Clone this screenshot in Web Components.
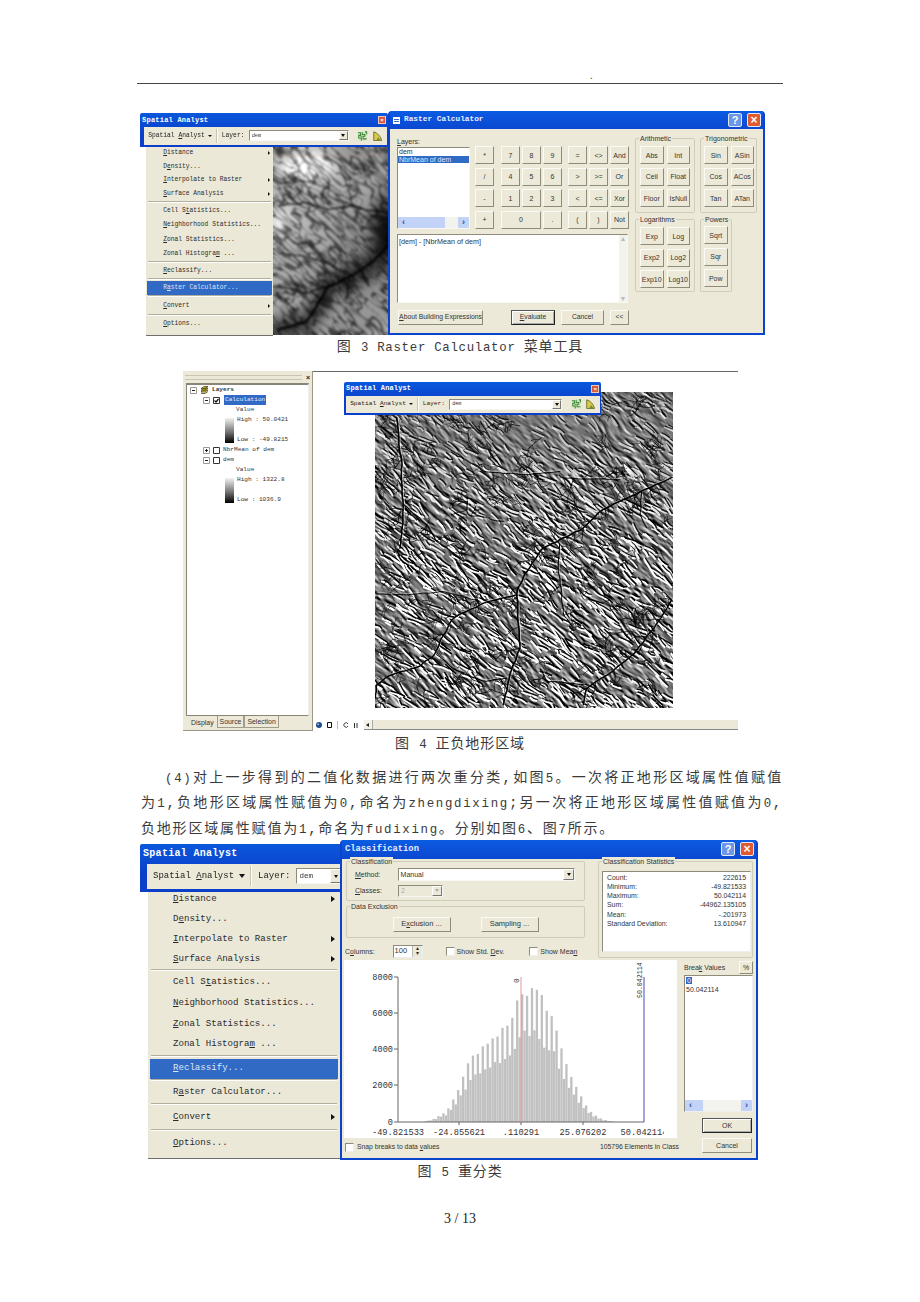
<!DOCTYPE html>
<html lang="zh"><head><meta charset="utf-8"><title>Raster Calculator</title>
<style>
html,body{margin:0;padding:0;background:#fff}
</style></head>
<body>
<doc-page>
  <doc-header></doc-header>

  <fig-three>
    <sa-menu slot="menu" style="--k:.69;width:127px;left:6px;top:35px">
      <sa-item arrow><u>D</u>istance</sa-item><sa-item>D<u>e</u>nsity...</sa-item><sa-item arrow><u>I</u>nterpolate to Raster</sa-item><sa-item arrow><u>S</u>urface Analysis</sa-item><sa-sep></sa-sep>
      <sa-item h="22">Cell S<u>t</u>atistics...</sa-item><sa-item h="21"><u>N</u>eighborhood Statistics...</sa-item><sa-item><u>Z</u>onal Statistics...</sa-item><sa-item h="21">Zonal Histogra<u>m</u> ...</sa-item><sa-sep></sa-sep>
      <sa-item h="22"><u>R</u>eclassify...</sa-item><sa-sep></sa-sep><sa-item h="22" active>R<u>a</u>ster Calculator...</sa-item><sa-sep></sa-sep>
      <sa-item h="24" arrow><u>C</u>onvert</sa-item><sa-sep></sa-sep><sa-item h="24"><u>O</u>ptions...</sa-item>
    </sa-menu>
    <sa-toolbar slot="bar" style="--k:.7;--inset:4px;width:248px"></sa-toolbar>
    <terrain-map slot="raster" mode="dem" w="115" h="188"></terrain-map>
    <xp-window slot="win" icon style="--title-size:7.8px;--title-h:18px;width:377px">
      <span slot="title">Raster Calculator</span>
      <calc-body></calc-body>
    </xp-window>
  </fig-three>
  <doc-caption style="padding-top:2px">图 <span>3 Raster Calculator </span>菜单工具</doc-caption>

  <fig-four>
    <toc-panel slot="toc"></toc-panel>
    <sa-toolbar slot="over" style="--k:.69;--inset:2px;width:257px;left:31px;top:10px;position:absolute"></sa-toolbar>
    <terrain-map slot="raster" mode="relief" w="298" h="316"></terrain-map>
  </fig-four>
  <doc-caption style="--cap-h:22px;margin-top:2px">图 <span>4 </span>正负地形区域</doc-caption>

  <doc-para></doc-para>

  <fig-five>
    <sa-menu slot="menu" style="--k:1;width:192px;left:8px;top:49px">
      <sa-item arrow><u>D</u>istance</sa-item><sa-item>D<u>e</u>nsity...</sa-item><sa-item arrow><u>I</u>nterpolate to Raster</sa-item><sa-item arrow><u>S</u>urface Analysis</sa-item><sa-sep></sa-sep>
      <sa-item h="22">Cell S<u>t</u>atistics...</sa-item><sa-item h="21"><u>N</u>eighborhood Statistics...</sa-item><sa-item><u>Z</u>onal Statistics...</sa-item><sa-item h="21">Zonal Histogra<u>m</u> ...</sa-item><sa-sep></sa-sep>
      <sa-item h="22" active><u>R</u>eclassify...</sa-item><sa-sep></sa-sep><sa-item h="22">R<u>a</u>ster Calculator...</sa-item><sa-sep></sa-sep>
      <sa-item h="24" arrow><u>C</u>onvert</sa-item><sa-sep></sa-sep><sa-item h="24"><u>O</u>ptions...</sa-item>
    </sa-menu>
    <sa-toolbar slot="bar" compact style="--k:1;--inset:7px;width:204px"></sa-toolbar>
    <xp-window slot="win" style="--title-size:8.8px;--title-h:19px;width:418px">
      <span slot="title">Classification</span>
      <class-body></class-body>
    </xp-window>
  </fig-five>
  <doc-caption style="--cap-h:22px;margin-top:1px">图 <span>5 </span>重分类</doc-caption>
  <doc-pageno>3 / 13</doc-pageno>
</doc-page>

<script>
const MONO='"Liberation Mono","Noto Sans CJK SC",monospace';
const SANS='"Liberation Sans","Noto Sans CJK SC",sans-serif';
const AFTER={};
function el(name,render){
  customElements.define(name,class extends HTMLElement{
    connectedCallback(){
      if(this.shadowRoot)return;
      const s=this.attachShadow({mode:'open'});
      s.innerHTML=render(this);
      const fn=AFTER[name]; if(fn)fn(this,s);
    }
  });
}

/* ---------- procedural terrain ---------- */
function lcg(s){return()=>(s=(s*1664525+1013904223)>>>0)/4294967296;}
function noise(seed){
  const r=lcg(seed),P=new Float32Array(262144);for(let i=0;i<P.length;i++)P[i]=r();
  return(x,y)=>{const i=Math.floor(x),j=Math.floor(y);let u=x-i,v=y-j;u=u*u*(3-2*u);v=v*v*(3-2*v);
    const a=P[((i&511)<<9)|(j&511)],b=P[(((i+1)&511)<<9)|(j&511)],c=P[((i&511)<<9)|((j+1)&511)],d=P[(((i+1)&511)<<9)|((j+1)&511)];
    return a+(b-a)*u+(c-a)*v+(a-b-c+d)*u*v;};
}
function linePath(ctx,p){ctx.beginPath();ctx.moveTo(p[0][0],p[0][1]);for(let i=1;i<p.length-1;i++){const mx=(p[i][0]+p[i+1][0])/2,my=(p[i][1]+p[i+1][1])/2;ctx.quadraticCurveTo(p[i][0],p[i][1],mx,my);}const l=p[p.length-1];ctx.lineTo(l[0],l[1]);}
function jag(p,r,step,amp){const o=[];for(let i=0;i<p.length-1;i++){const[a,b]=p[i],[c,d]=p[i+1];const L=Math.hypot(c-a,d-b),n=Math.max(1,Math.round(L/step));for(let t=0;t<n;t++){const f=t/n;o.push([a+(c-a)*f+(r()-.5)*amp,b+(d-b)*f+(r()-.5)*amp]);}}o.push(p[p.length-1]);return o;}
function branch(ctx,r,x,y,ang,len,w,depth,col){
  const pts=[[x,y]];let a=ang,cx=x,cy=y,n=Math.max(2,Math.round(len/3));
  for(let i=0;i<n;i++){a+=(r()-.5)*.9;cx+=Math.cos(a)*len/n;cy+=Math.sin(a)*len/n;pts.push([cx,cy]);}
  ctx.strokeStyle=col;ctx.lineWidth=w;linePath(ctx,pts);ctx.stroke();
  if(depth>0){for(let i=1;i<pts.length;i++){if(r()<.6){const s=r()<.5?-1:1;branch(ctx,r,pts[i][0],pts[i][1],a+s*(.6+r()*.6),len*(.45+r()*.25),w*.8,depth-1,col);}}}
}
function drawRelief(ctx,W,H){
  const n1=noise(11),n2=noise(23),n3=noise(37),n4=noise(51);
  const A=42*Math.PI/180,ca=Math.cos(A),sa=Math.sin(A);
  const h=(x,y)=>{const wx=x+7*n2(x/24,y/24),wy=y+7*n3(x/24+9,y/24);const q=ca*wx+sa*wy,p=-sa*wx+ca*wy;return n1(q/9,p/2.6)+.4*n1(q/4.5+50,p/1.5+50);};
  const topM=(x,y)=>Math.exp(-((x-175)**2/100**2+(y-28)**2/36**2));
  const img=ctx.createImageData(W,H),D=img.data;
  for(let y=0;y<H;y++)for(let x=0;x<W;x++){
    const d=h(x-sa,y+ca)-h(x+sa,y-ca);
    let m=.65+.5*n4(x/60,y/60);
    m*=1-.6*topM(x,y);
    const v=Math.max(0,Math.min(255,118+d*190*m));
    const i=(y*W+x)*4;D[i]=D[i+1]=D[i+2]=v;D[i+3]=255;
  }
  ctx.putImageData(img,0,0);
  ctx.lineCap='round';ctx.lineJoin='round';
  const r=lcg(99);
  const T=a=>a.map(([x,y])=>[x/3-5,y/3-4]);
  const main=[
   [[[905,270],[790,320],[690,370],[640,420],[520,480],[470,550],[440,610],[445,700],[450,780],[420,860],[400,950]],1.6],
   [[[440,620],[330,650],[250,690],[215,750],[195,800],[140,840],[60,860],[20,890],[15,930]],1.5],
   [[[80,90],[95,230],[95,300],[100,380],[95,440],[90,480]],1.5],
   [[[905,640],[850,720],[800,790],[730,850],[650,900],[640,950]],1.5],
   [[[570,470],[565,540],[575,620],[580,680],[610,720]],1],
   [[[815,310],[810,380],[830,420]],1],
   [[[100,350],[170,410],[200,460],[280,520]],1.1],
   [[[290,340],[290,380],[400,400]],.9],
   [[[330,100],[360,150]],.9],
   [[[220,170],[340,250],[460,260],[570,250]],.9],
   [[[580,270],[750,275]],.9],
   [[[200,800],[260,850],[340,880],[410,870]],1.1],
   [[[510,840],[530,880],[640,890]],1],
   [[[20,620],[110,620],[220,610],[330,640]],.9]
  ].map(([p,w])=>[jag(T(p),r,5,1.6),w]);
  for(let i=0;i<1350;i++){
    const x=r()*W,y=r()*H;
    const t=topM(x,y);
    if(r()<t*.85)continue;
    const ang=(18+r()*42)*Math.PI/180,len=5+r()*12,bend=(r()-.5)*3;
    const p=[[x,y],[x+Math.cos(ang)*len*.5-Math.sin(ang)*bend,y+Math.sin(ang)*len*.5+Math.cos(ang)*bend],[x+Math.cos(ang)*len,y+Math.sin(ang)*len]];
    const f=Math.min(1,y/170);
    ctx.strokeStyle=`rgba(255,255,255,${.5+.48*f})`;ctx.lineWidth=1.2+r()*1.3;linePath(ctx,p.map(([a,b])=>[a-1.1,b+1.4]));ctx.stroke();
    ctx.strokeStyle=`rgba(0,0,0,${.72+.25*f})`;ctx.lineWidth=.8+r()*.8;linePath(ctx,p);ctx.stroke();
  }
  for(let i=0;i<170;i++){
    const x=r()*W,y=r()*H;
    if(r()<topM(x,y)*.8)continue;
    branch(ctx,r,x,y,Math.PI+(.2+r()*.9)*(r()<.85?1:-1),9+r()*11,.9,2,'rgba(0,0,0,.72)');
  }
  for(const [p,w] of main){for(let i=0;i<p.length-1;i+=2){if(r()<.55){
    const dir=Math.atan2(p[i+1][1]-p[i][1],p[i+1][0]-p[i][0])+(r()<.5?-1:1)*(.8+r()*.6);
    branch(ctx,r,p[i][0],p[i][1],dir,8+r()*9,.9,1,'rgba(0,0,0,.85)');}}}
  for(const [p,w] of main){
    ctx.strokeStyle='rgba(255,255,255,.6)';ctx.lineWidth=w*.7;linePath(ctx,p.map(([a,b])=>[a+1.3,b-1.3]));ctx.stroke();
  }
  for(const [p,w] of main){ctx.strokeStyle='#000';ctx.lineWidth=w;linePath(ctx,p);ctx.stroke();}
}
function drawDem(ctx,W,H){
  const n1=noise(5),n2=noise(17),n3=noise(29);
  const T=a=>a.map(([x,y])=>[x/3-1,y/3-1]);
  const river=T([[350,295],[300,350],[240,390],[170,420],[130,490],[100,530],[20,550]]);
  const segD=(x,y,p)=>{let best=1e9;for(let i=0;i<p.length-1;i++){const[a,b]=p[i],[c,d]=p[i+1];const dx=c-a,dy=d-b,t=Math.max(0,Math.min(1,((x-a)*dx+(y-b)*dy)/(dx*dx+dy*dy)));const u=a+t*dx-x,v=b+t*dy-y;best=Math.min(best,u*u+v*v);}return best;};
  const A=40*Math.PI/180,ca=Math.cos(A),sa=Math.sin(A);
  const img=ctx.createImageData(W,H),D=img.data;
  for(let y=0;y<H;y++)for(let x=0;x<W;x++){
    let base=112+34*n3(x/40,y/40);
    base+=120*Math.exp(-((x-33)**2/24**2+(y-19)**2/13**2));
    base+=55*Math.exp(-((x-8)**2+(y-76)**2)/16**2);
    base*=1-.6*Math.exp(-segD(x,y,river)/(2*10*10));
    base*=1-.88*Math.exp(-((x-113)**2/15**2+(y-80)**2/34**2));
    const wx=x+6*n2(x/20,y/20),wy=y+6*n2(x/20+40,y/20+30);
    const q=ca*wx+sa*wy,p=-sa*wx+ca*wy;
    const v=Math.abs(n1(q/13,p/3.4)-.5)*2;
    const ss=Math.min(1,v/.34);
    const g=base*(.5+.75*ss*ss*(3-2*ss));
    const i=(y*W+x)*4;D[i]=D[i+1]=D[i+2]=Math.max(0,Math.min(255,g));D[i+3]=255;
  }
  ctx.putImageData(img,0,0);
  ctx.lineCap='round';ctx.lineJoin='round';
  const r=lcg(321);
  for(let i=0;i<200;i++){
    const x=r()*W,y=r()*H,ang=(28+r()*30)*Math.PI/180,len=5+r()*10;
    ctx.strokeStyle='rgba(15,15,15,.55)';ctx.lineWidth=.9+r()*.7;
    linePath(ctx,[[x,y],[x+Math.cos(ang)*len*.5+(r()-.5)*2,y+Math.sin(ang)*len*.5],[x+Math.cos(ang)*len,y+Math.sin(ang)*len]]);ctx.stroke();
  }
  for(let i=0;i<42;i++){
    branch(ctx,r,r()*W,r()*H,Math.PI+(.3+r()*.8),10+r()*10,1,2,'rgba(15,15,15,.55)');
  }
  const rivs=[[river,2.4],[T([[350,200],[300,195],[240,180],[170,190],[100,170],[20,180]]),1.3],[T([[230,400],[225,460]]),1.2],[T([[270,370],[290,420]]),1.1],[T([[20,110],[100,105],[170,130]]),1],[T([[20,320],[90,330],[160,350],[240,390]]),1.1],[T([[20,420],[100,440],[170,420]]),1.1],[T([[200,60],[230,130],[240,180]]),1]].map(([p,w])=>[jag(p,r,5,1.6),w]);
  for(const[p,w]of rivs){for(let i=0;i<p.length-1;i+=2){if(r()<.5){
    const dir=Math.atan2(p[i+1][1]-p[i][1],p[i+1][0]-p[i][0])+(r()<.5?-1:1)*(.8+r()*.5);
    branch(ctx,r,p[i][0],p[i][1],dir,7+r()*8,.9,1,'rgba(15,15,15,.6)');}}}
  for(const[p,w]of rivs){ctx.strokeStyle='rgba(0,0,0,.9)';ctx.lineWidth=w;linePath(ctx,p);ctx.stroke();}
  ctx.strokeStyle='rgba(190,140,130,.45)';ctx.lineWidth=1;ctx.beginPath();ctx.moveTo(0,9);ctx.lineTo(W,8);ctx.stroke();
}
AFTER['terrain-map']=(h,s)=>{
  const c=s.querySelector('canvas'),ctx=c.getContext('2d'),W=c.width,H=c.height,dem=h.getAttribute('mode')==='dem';
  (dem?drawDem:drawRelief)(ctx,W,H);
  ctx.filter=dem?'blur(.8px)':'blur(.5px)';ctx.drawImage(c,0,0);ctx.filter='none';
};
el('terrain-map',h=>`<style>:host{display:block;width:${h.getAttribute('w')}px;height:${h.getAttribute('h')}px;line-height:0}canvas{display:block}</style><canvas width="${h.getAttribute('w')}" height="${h.getAttribute('h')}"></canvas>`);

/* ---------- document ---------- */
el('doc-page',()=>`<style>:host{display:block;width:920px;height:1302px;overflow:hidden;background:#fff;color:#333;font-family:${MONO}}</style><slot></slot>`);
el('doc-header',()=>`<style>:host{display:block;margin:0 137px;height:83px;border-bottom:1.5px solid #444;box-sizing:content-box}
div{padding:70px 0 0 453px;font:10px/12px ${SANS};color:#333}</style><div>.</div>`);
el('doc-caption',()=>`<style>:host{display:block;text-align:center;font-family:${MONO};font-size:14px;letter-spacing:.9px;line-height:var(--cap-h,21px);color:#3a3a3a}
::slotted(span){font-size:12.4px;letter-spacing:.7px}</style><slot></slot>`);
el('doc-para',()=>`<style>:host{display:block;margin:9.5px 137px 0 141px;font-family:${MONO};font-size:14px;color:#3a3a3a;letter-spacing:1.8px}
div{white-space:nowrap;height:25.5px;line-height:25.5px}.j{text-align:justify;text-align-last:justify}.i{padding-left:24px}
b{font-weight:400;font-size:12.4px;letter-spacing:1.7px;line-height:0}</style>
<div class="j i"><b>(4)</b>对上一步得到的二值化数据进行两次重分类,如图<b>5</b>。一次将正地形区域属性值赋值</div>
<div class="j">为<b>1</b>,负地形区域属性赋值为<b>0</b>,命名为<b>zhengdixing</b>;另一次将正地形区域属性值赋值为<b>0</b>,</div>
<div>负地形区域属性赋值为<b>1</b>,命名为<b>fudixing</b>。分别如图<b>6</b>、图<b>7</b>所示。</div>`);
el('doc-pageno',()=>`<style>:host{display:block;text-align:center;font:14px/22px "Liberation Serif",serif;color:#222;margin-top:24px}</style><slot></slot>`);

/* ---------- figure shells ---------- */
el('fig-three',()=>`<style>:host{display:flex;position:relative;margin:27px 0 0 140px;width:625px;height:224px;filter:blur(.3px)}
.l{width:248px;padding-top:2px;box-sizing:border-box;position:relative}
.r{display:flex;justify-content:flex-end}
::slotted(sa-menu){position:absolute;z-index:1}
</style><slot name="menu"></slot><div class="l"><slot name="bar"></slot><div class="r"><slot name="raster"></slot></div></div><slot name="win"></slot>`);
el('fig-four',()=>`<style>:host{display:flex;margin:12px 0 0 183px;width:555px;height:360px;filter:blur(.3px)}
.m{position:relative;flex:1;display:flex;flex-direction:column;border-top:1px solid #666;box-sizing:border-box}
.c{flex:1;padding:20px 0 0 62px}
.s{height:10px;display:flex;align-items:center;margin-bottom:1px}
.ic{width:51px;display:flex;align-items:center;gap:5px;padding-left:3px;box-sizing:border-box}
.bar{flex:1;height:10px;background:#ece9d8;border-bottom:1px solid #888;box-sizing:border-box;display:flex;align-items:center}
.bar b{width:8px;height:9px;background:#f4f2e8;border-right:1px solid #aaa;display:flex;align-items:center;justify-content:center}
.bar i{border:2.5px solid transparent;border-right:3px solid #222;margin-left:-3px}
</style><slot name="toc"></slot><div class="m"><slot name="over"></slot><div class="c"><slot name="raster"></slot></div>
<div class="s"><div class="ic">
<svg width="6" height="6" viewBox="0 0 6 6"><circle cx="3" cy="3" r="3" fill="#234a8c"/><circle cx="2.2" cy="2.2" r="1" fill="#9ab4dd"/></svg>
<svg width="5" height="6" viewBox="0 0 5 6"><path d="M.5.5h4v5h-4z" fill="#fff" stroke="#111"/></svg>
<svg width="1" height="8"><rect width="1" height="8" fill="#bbb"/></svg>
<svg width="6" height="6" viewBox="0 0 6 6"><path d="M5 2A2.2 2.2 0 1 0 5 4" fill="none" stroke="#333" stroke-width=".9"/></svg>
<svg width="4" height="5" viewBox="0 0 4 5"><path d="M.5 0v5M3 0v5" stroke="#333" stroke-width="1"/></svg>
</div><div class="bar"><b><i></i></b></div></div></div>`);
el('fig-five',()=>`<style>:host{display:flex;position:relative;margin:-2.5px 0 0 140px;width:618px;height:320px;filter:blur(.3px)}
.l{width:200px;padding-top:4px;box-sizing:border-box}
.w{position:relative;z-index:3}
::slotted(sa-menu){position:absolute;z-index:1}
</style><slot name="menu"></slot><div class="l"><slot name="bar"></slot></div><div class="w"><slot name="win"></slot></div>`);

/* ---------- Spatial Analyst toolbar and menu ---------- */
el('sa-toolbar',h=>{const compact=h.hasAttribute('compact');return `<style>
:host{display:block;box-sizing:border-box;position:relative;z-index:2;background:linear-gradient(#0a58dc,#0b3fca 60%);border-radius:2px 2px 0 0;padding-bottom:calc(var(--k)*3px);color:#222}
.t{height:calc(var(--k)*20px);display:flex;align-items:center;justify-content:space-between;padding:0 calc(var(--k)*3px);color:#fff;font:bold calc(var(--k)*10px)/1 ${MONO};letter-spacing:calc(var(--k)*.3px)}
.x{width:calc(var(--k)*11px);height:calc(var(--k)*11px);background:#d9563a;border:1px solid #f4c8b8;box-sizing:border-box;color:#fff;display:flex;align-items:center;justify-content:center;font:bold 6px/1 ${SANS};letter-spacing:0}
.b{height:calc(var(--k)*25px);margin:0 0 0 var(--inset);margin-right:calc(var(--k)*2px);background:#ece9d8;display:flex;align-items:center;padding-left:calc(var(--k)*6px);font:calc(var(--k)*9px)/1 ${MONO};overflow:hidden;white-space:nowrap}
.a{width:0;height:0;border:calc(var(--k)*3.5px) solid transparent;border-top:calc(var(--k)*4px) solid #111;border-bottom:0;margin:0 calc(var(--k)*5px) 0 calc(var(--k)*5px)}
.s{width:1px;height:80%;background:#fff;box-shadow:-1px 0 #c9c5b2;margin:0 calc(var(--k)*6px) 0 calc(var(--k)*1px)}
x-combo{flex:1;margin-left:calc(var(--k)*6px);height:calc(var(--k)*16px);min-width:0;font:calc(var(--k)*7.5px) ${MONO}}
.i{display:flex;gap:calc(var(--k)*6px);margin:0 calc(var(--k)*6px) 0 calc(var(--k)*12px)}
svg{width:calc(var(--k)*15px);height:calc(var(--k)*15px);display:block}
</style><div class="t"><span>Spatial Analyst</span>${compact?'':'<span class="x">×</span>'}</div>
<div class="b"><span>Spatial <u>A</u>nalyst</span><span class="a"></span><span class="s"></span><span>Layer:</span><x-combo value="dem"></x-combo>
${compact?'':`<div class="i"><svg viewBox="0 0 12 12"><rect x="1" y="1" width="10" height="10" fill="#d7e6c4"/><path d="M1 2h3v3H2v3h3v3M6 1v3h3v2H7v3h4M9 1h2v3M4 6h2" fill="none" stroke="#3d8a3a" stroke-width="1.2"/></svg>
<svg viewBox="0 0 12 12"><path d="M2 1v10h9C10 6 6 2 2 1z" fill="#dcc84a" stroke="#5c6a2a"/><path d="M7 7l3 3.5H5z" fill="#7b8d3a"/></svg></div>`}</div>`;});

el('sa-menu',()=>`<style>:host{display:block;box-sizing:border-box;background:#ebe8d8;border-bottom:1px solid #6e6e6e;padding-bottom:calc(var(--k)*3px);color:#2a2a2a}
</style><slot></slot>`);
el('sa-item',h=>{const k=h.getAttribute('h')||20;const act=h.hasAttribute('active');return `<style>
:host{display:flex;align-items:center;justify-content:space-between;box-sizing:border-box;height:calc(var(--k)*${k}px);padding:0 calc(var(--k)*5px) 0 calc(var(--k)*25px);font:calc(var(--k)*9.1px)/1 ${MONO};white-space:nowrap;${act?`background:linear-gradient(#fff0 0,#fff0 9%,#316ac5 9%,#316ac5 100%);color:#dbe6f7;margin:0 calc(var(--k)*2px);padding-left:calc(var(--k)*23px);padding-right:calc(var(--k)*3px)`:''}}
i{width:0;height:0;border:calc(var(--k)*3.5px) solid transparent;border-left:calc(var(--k)*4px) solid #111;border-right:0}
</style><span><slot></slot></span>${h.hasAttribute('arrow')?'<i></i>':''}`;});
el('sa-sep',()=>`<style>:host{display:block;height:2px;margin:0 calc(var(--k)*3px);background:linear-gradient(#b2ae9c 50%,#fff 50%);box-sizing:border-box}</style>`);

/* ---------- shared widgets ---------- */
el('xp-window',h=>`<style>:host{display:block;box-sizing:border-box;height:100%;background:#0b44cc;border-radius:4px 4px 0 0;padding:0 2px 2px;overflow:hidden}
.t{height:var(--title-h);display:flex;align-items:center;gap:4px;padding:0 2px 0 3px;color:#e8f0ff;font:bold var(--title-size)/1 ${MONO};background:linear-gradient(#0b5ce2,#0c50d8 55%,#0a48d0)}
.t .n{flex:1}.g{width:7px;height:7px;background:repeating-linear-gradient(#fff 0 1px,#3a66c8 1px 2px);border:1px solid #fff;box-sizing:border-box}
.q,.c{width:14px;height:14px;border-radius:2px;border:1px solid #dfe8fb;box-sizing:border-box;display:flex;align-items:center;justify-content:center;color:#fff;font:bold 11px/1 ${SANS}}
.q{background:#6c97e6;margin-right:1px}.c{background:#df5a30;font-size:12px}
.b{background:#ece9d8;height:calc(100% - var(--title-h));color:#333}
</style><div class="t">${h.hasAttribute('icon')?'<span class="g"></span>':''}<span class="n"><slot name="title"></slot></span><span class="q">?</span><span class="c">×</span></div><div class="b"><slot></slot></div>`);
el('x-btn',h=>`<style>:host{display:inline-flex;align-items:center;justify-content:center;box-sizing:border-box;background:#ece9d8;border:1px solid;border-color:#fbfaf5 #8e8b7b #8e8b7b #fbfaf5;font:var(--bf,6.8px)/1 ${SANS};color:#333;white-space:nowrap;overflow:hidden}
:host([default]){border-color:#555 #222 #222 #555;box-shadow:inset 1px 1px #fff,inset -1px -1px #aaa}</style><slot></slot>`);
el('x-combo',h=>{const dis=h.hasAttribute('disabled');return `<style>:host{display:flex;box-sizing:border-box;background:${dis?'#ece9d8':'#fff'};border:1px solid;border-color:#8e8b7b #f8f8f2 #f8f8f2 #8e8b7b;align-items:center;padding-left:2px;color:${dis?'#aaa':'#333'};overflow:hidden}
span{flex:1}b{align-self:stretch;aspect-ratio:1;max-width:11px;background:#ece9d8;border:1px solid;border-color:#fff #777 #777 #fff;box-sizing:border-box;display:flex;align-items:center;justify-content:center}
i{width:0;height:0;border:2.5px solid transparent;border-top:3px solid ${dis?'#aaa':'#111'};border-bottom:0}</style><span>${h.getAttribute('value')||''}</span><b><i></i></b>`;});
el('x-group',h=>`<style>:host{display:block;box-sizing:border-box;position:relative;border:1px solid #cfccba;border-radius:2px}
span{position:absolute;left:3px;top:-5px;background:#ece9d8;padding:0 1px;font:7px/9px ${SANS};color:#333;white-space:nowrap}</style><span>${h.getAttribute('label')}</span><slot></slot>`);
el('x-check',()=>`<style>:host{display:inline-block;width:9px;height:9px;background:#fff;border:1px solid;border-color:#8e8b7b #eee #eee #8e8b7b;box-sizing:border-box;flex:none}</style>`);
el('x-hscroll',h=>`<style>:host{display:flex;height:11px;background:#f3f3ee;align-items:stretch;justify-content:space-between}
b{width:11px;background:#c3d3f8;border-radius:1px;color:#2c52a8;font:bold 9px/10px ${SANS};text-align:center}
i{flex:none;width:${h.getAttribute('thumb')||10}%;background:#c3d3f8}
</style><b>‹</b><i style="margin-right:auto"></i><b>›</b>`);

/* ---------- Raster Calculator body ---------- */
el('calc-keypad',()=>{
  const rows=[['*',['7','8','9'],['=','<>','And']],['/',['4','5','6'],['>','>=','Or']],['-',['1','2','3'],['<','<=','Xor']],['+',['0','','.'],['(',')','Not']]];
  const esc=s=>s.replace(/</g,'&lt;').replace(/>/g,'&gt;');
  let html='';
  rows.forEach((r,ri)=>{
    const row=ri+1;
    html+=`<x-btn style="grid-area:${row}/1">${esc(r[0])}</x-btn>`;
    r[1].forEach((t,i)=>{
      if(t==='0'){html+=`<x-btn style="grid-area:${row}/3/auto/span 2">0</x-btn>`;return;}
      if(t==='')return;
      html+=`<x-btn style="grid-area:${row}/${3+i}">${t}</x-btn>`;
    });
    r[2].forEach((t,i)=>{html+=`<x-btn style="grid-area:${row}/${7+i}">${esc(t)}</x-btn>`;});
  });
  return `<style>:host{display:grid;grid-template-columns:19px 3px 19px 19px 19px 2px 19px 19px 19px;grid-auto-rows:18px;column-gap:2px;row-gap:3.5px;--bf:7px}</style>${html}`;
});
el('calc-group',h=>{
  const cols=+h.getAttribute('cols')||2;
  const items=(h.getAttribute('items')||'').split(' ');
  return `<style>:host{display:block}x-group{height:100%;padding:var(--pad,7px 0 0 4px)}
.g{display:grid;grid-template-columns:repeat(${cols},var(--bw,23.5px));grid-auto-rows:18px;column-gap:3px;row-gap:3.5px;--bf:7px}</style>
<x-group label="${h.getAttribute('label')}"><div class="g">${items.map(t=>`<x-btn>${t}</x-btn>`).join('')}</div></x-group>`;
});
el('calc-body',()=>`<style>:host{display:flex;height:100%;box-sizing:border-box;font:7px/1 ${SANS};color:#333}
.L{width:233px;margin-left:7px;padding-top:8px;display:flex;flex-direction:column}
.top{display:flex;height:94px}
.lc{width:73px;margin-right:5px}
.lab{height:10px;line-height:10px}
.list{height:82px;background:#fff;border:1px solid;border-color:#8e8b7b #f8f8f2 #f8f8f2 #8e8b7b;box-sizing:border-box;display:flex;flex-direction:column;font-size:7px}
.list div{padding-left:1px;height:7.5px;line-height:7.5px}.sel{background:#316ac5;color:#dbe6f7}
.list .sp{flex:1;height:auto}
calc-keypad{margin-top:9px}
.ex{height:69px;margin:3px 2px 0 0;background:#fff;border:1px solid;border-color:#8e8b7b #f8f8f2 #f8f8f2 #8e8b7b;box-sizing:border-box;display:flex;font:7.2px/1 ${SANS}}
.ex p{flex:1;margin:0;padding:3px 1px}
.vs{width:8px;background:#f3f3ee;display:flex;flex-direction:column;justify-content:space-between;align-items:center;color:#bbb;font-size:7px}
.bt{display:flex;height:15px;margin-top:7px;--bf:6.8px}
.R{margin-left:5px;padding-top:9px;display:grid;grid-template-columns:60px 57px;grid-template-rows:75px 73px;column-gap:5px;row-gap:6px}
</style>
<div class="L"><div class="top"><div class="lc"><div class="lab"><u>L</u>ayers:</div>
<div class="list"><div>dem</div><div class="sel">NbrMean of dem</div><div class="sp"></div><x-hscroll thumb="50"></x-hscroll></div></div>
<calc-keypad></calc-keypad></div>
<div class="ex"><p>[dem] - [NbrMean of dem]</p><div class="vs"><span>▲</span><span>▼</span></div></div>
<div class="bt"><x-btn style="width:85px;margin-left:1px"><span><u>A</u>bout Building Expressions</span></x-btn><x-btn default style="width:44px;margin-left:28px"><span><u>E</u>valuate</span></x-btn><x-btn style="width:43px;margin-left:6px">Cancel</x-btn><x-btn style="width:19px;margin-left:6px">&lt;&lt;</x-btn></div></div>
<div class="R">
<calc-group label="Arithmetic" items="Abs Int Ceil Float Floor IsNull"></calc-group>
<calc-group label="Trigonometric" items="Sin ASin Cos ACos Tan ATan" style="--pad:7px 0 0 3px"></calc-group>
<calc-group label="Logarithms" items="Exp Log Exp2 Log2 Exp10 Log10"></calc-group>
<calc-group label="Powers" cols="1" items="Sqrt Sqr Pow" style="width:32px;--pad:6px 0 0 3px"></calc-group>
</div>`);

/* ---------- Classification body ---------- */
el('class-body',()=>`<style>:host{display:block;height:100%;box-sizing:border-box;padding:2px 2px 0 3px;font:7px/1 ${SANS};color:#333}
.top{display:flex;height:99px}
.ll{width:239px;margin-left:1px}
.row{display:flex;align-items:center}
.g1{height:40px;padding:6px 9px 0 8px}.g1 .lb{width:43px}
.g2{height:32px;margin-top:5px;display:flex;justify-content:center;align-items:flex-start;padding-top:10px;gap:30px;--bf:7.5px}
.cols{margin:7px 0 0 -1px;height:13px}
.spin{width:30px;height:13px;margin:0 23px 0 18px;background:#fff;border:1px solid;border-color:#8e8b7b #eee #eee #8e8b7b;box-sizing:border-box;display:flex;justify-content:space-between;align-items:center;padding-left:1px;font-size:7.5px}
.spin b{width:10px;height:100%;background:#ece9d8;border-left:1px solid #bbb;color:#333;font:6px/5px ${SANS};text-align:center;box-sizing:border-box}
.st{width:155px;margin-left:13px;height:97px;padding:9px 1px 0 3px}
.sb{height:81px;background:#fff;border:1px solid;border-color:#8e8b7b #eee #eee #8e8b7b;box-sizing:border-box;padding:1px 4px}
.sb div{display:flex;justify-content:space-between;line-height:9.27px;height:9.27px;font-size:6.9px}
.low{display:flex;margin-top:0}
.hl{width:332px}
.hs{height:178px;background:#fff;margin-left:-1px}
.sn{display:flex;align-items:center;justify-content:space-between;margin-top:3px;height:14px;font-size:6.8px;width:334px}
.sn .c{display:flex;align-items:center;gap:3px}
.rr{width:69px;margin-left:7px;display:flex;flex-direction:column}
.bh{display:flex;align-items:center;justify-content:space-between;height:15px;margin-bottom:0}
.pc{width:14px;height:13px;--bf:7px}
.bl{height:137px;background:#fff;border:1px solid;border-color:#8e8b7b #eee #eee #8e8b7b;box-sizing:border-box;display:flex;flex-direction:column;font-size:7px}
.bl div{padding:1px 1px 0;line-height:8px}.bl .s{flex:1}.bl em{background:#316ac5;color:#fff;font-style:normal;padding:0 1px}
x-btn.ok{height:15px;margin:6px 1px 0 18px;--bf:7px}
x-btn.ca{height:15px;margin:5px 1px 0 18px;--bf:7px}
</style>
<div class="top"><div class="ll">
<x-group label="Classification" class="g1">
 <div class="row"><span class="lb"><u>M</u>ethod:</span><x-combo value="Manual" style="width:179px;height:13px;font:7px ${SANS}"></x-combo></div>
 <div class="row" style="margin-top:4px"><span class="lb"><u>C</u>lasses:</span><x-combo value="2" disabled style="width:45px;height:12px;font:7px ${SANS}"></x-combo></div>
</x-group>
<x-group label="Data Exclusion" class="g2"><x-btn style="width:58px;height:15px"><span>E<u>x</u>clusion ...</span></x-btn><x-btn style="width:58px;height:15px">Sampling ...</x-btn></x-group>
<div class="row cols"><span>C<u>o</u>lumns:</span><div class="spin">100<b>▴<br>▾</b></div><x-check></x-check><span style="margin:0 25px 0 2px">Show Std. <u>D</u>ev.</span><x-check></x-check><span style="margin-left:2px">Show Mea<u>n</u></span></div>
</div>
<x-group label="Classification Statistics" class="st"><div class="sb">
<div><span>Count:</span><span>222615</span></div><div><span>Minimum:</span><span>-49.821533</span></div><div><span>Maximum:</span><span>50.042114</span></div><div><span>Sum:</span><span>-44962.135105</span></div><div><span>Mean:</span><span>-.201973</span></div><div><span>Standard Deviation:</span><span>13.610947</span></div>
</div></x-group></div>
<div class="low"><div class="hl"><div class="hs"><hist-chart></hist-chart></div>
<div class="sn"><span class="c"><x-check></x-check><span>Snap breaks to data <u>v</u>alues</span></span><span>105796 Elements in Class</span></div></div>
<div class="rr"><div class="bh"><span>Brea<u>k</u> Values</span><x-btn class="pc">%</x-btn></div>
<div class="bl"><div><em>0</em></div><div>50.042114</div><div class="s"></div><x-hscroll thumb="10"></x-hscroll></div>
<x-btn class="ok" default>OK</x-btn><x-btn class="ca">Cancel</x-btn></div></div>`);

el('hist-chart',()=>{
  const px=[[423,0],[428,60],[436,200],[441,400],[447,550],[453,1100],[460,1900],[470,3400],[480,3950],[497,4700],[507,5400],[513,5800],[520,6900],[531,7350],[536,7570],[542,7000],[547,6300],[553,5800],[558,5000],[564,3800],[570,2800],[575,2200],[580,1600],[587,900],[592,550],[597,350],[603,150],[617,0]];
  const env=x=>{for(let i=1;i<px.length;i++){if(x<=px[i][0]){const a=px[i-1],b=px[i];return a[1]+(b[1]-a[1])*(x-a[0])/(b[0]-a[0]);}}return 0;};
  let bars='',seed=7;const rnd=()=>(seed=(seed*16807)%2147483647)/2147483647;
  const X0=54,Y0=162,S=145/8000;
  for(let i=0;i<100;i++){
    const ax=399+i*2.46+1;
    if(ax<423||ax>617)continue;
    const e=env(ax);
    const f=(i%2===0)?(.96+.06*rnd()):(.62+.1*rnd());
    const v=e*f,h=v*S;
    bars+=`<rect x="${(X0+i*2.46).toFixed(2)}" y="${(Y0-h).toFixed(2)}" width="2.3" height="${h.toFixed(2)}"/>`;
  }
  const ys=[[8000,17],[6000,53],[4000,89],[2000,125],[0,162]];
  const xl=[['-49.821533',54],['-24.855621',115],['.110291',177],['25.076202',239],['50.042114',300]];
  return `<style>:host{display:block}svg{display:block}text{font-family:${MONO};fill:#333}</style>
<svg width="332" height="178" viewBox="0 0 332 178"><defs><clipPath id="cl"><rect width="320" height="178"/></clipPath></defs>
<g fill="#c0c0c0">${bars}</g>
<path d="M54 17V162H300" fill="none" stroke="#666"/>
${ys.map(([v,y])=>`<path d="M50 ${y}h4" stroke="#666"/><text x="49" y="${y+3}" text-anchor="end" font-size="8.6">${v}</text>`).join('')}
${[115,177,239].map(x=>`<path d="M${x} 162v3" stroke="#666"/>`).join('')}
<path d="M177 17V162" stroke="#e39a9a"/><path d="M300 17V162" stroke="#4a4ab0"/>
<text transform="translate(175 23) rotate(-90)" font-size="8">0</text>
<text transform="translate(298 38) rotate(-90)" font-size="6.6">50.042114</text>
<g clip-path="url(#cl)" font-size="8.7" text-anchor="middle">${xl.map(([t,x])=>`<text x="${x}" y="175">${t}</text>`).join('')}</g></svg>`;
});

/* ---------- table of contents ---------- */
el('toc-legend',h=>`<style>:host{display:flex;height:30px;padding-left:38px;align-items:center;gap:4px}
i{width:9px;height:25px;background:linear-gradient(#f2f2f2,#777 55%,#000)}
div{display:flex;flex-direction:column;justify-content:space-between;height:30px;margin-left:-1px}span{line-height:10px}</style>
<i></i><div><span>High : ${h.getAttribute('high')}</span><span>Low : ${h.getAttribute('low')}</span></div>`);
el('toc-panel',()=>{
  const box=(s)=>`<svg width="7" height="7" viewBox="0 0 7 7"><path d="M.5.5h6v6h-6z" fill="#fff" stroke="#9a9a90"/><path d="M2 3.5h3${s?'M3.5 2v3':''}" stroke="#222"/></svg>`;
  const chk=(c)=>`<svg width="7" height="7" viewBox="0 0 7 7"><path d="M.5.5h6v6h-6z" fill="#fff" stroke="#333"/>${c?'<path d="M1.5 3.5l1.5 1.5 2.5-3" fill="none" stroke="#111" stroke-width="1.2"/>':''}</svg>`;
  return `<style>:host{display:flex;flex-direction:column;width:130px;height:360px;background:#ece9d8;box-sizing:border-box;border-right:1px solid #9a9786;font:6.1px/10px ${MONO};color:#333}
.g{height:12px;display:flex;align-items:center;justify-content:space-between;padding:0 2px 0 2px}
.g i{flex:1;height:3px;margin-right:4px;border-top:1px solid #c8c5b3;border-bottom:1px solid #c8c5b3}.g b{font:bold 7px/1 ${SANS};color:#222}
.w{flex:1;margin:0 3px 0 3px;background:#fff;border:1px solid;border-width:2px 1px 1px 1.5px;border-color:#88857a #eee #88857a #88857a;padding-top:0;overflow:hidden}
.r{height:10px;display:flex;align-items:center;gap:3px;white-space:nowrap}
.a{padding-left:3px}.b{padding-left:16px}.v{padding-left:49px}
.c{background:#316ac5;color:#e2ebfa;padding:0 1px;margin-left:1px}
.t{display:flex;height:15px;padding-left:5px;align-items:flex-start;font:6.9px/10px ${SANS};border-bottom:1px solid #9a9786;box-sizing:border-box}
.t span{border:1px solid #a09d8c;border-top:0;padding:1px 2px 0;background:#ece9d8;margin-right:0}
.t span:first-child{border:0;padding:2px 3px 0}
</style><div class="g"><i></i><b>×</b></div>
<div class="w">
<div class="r a">${box(0)}<svg width="9" height="8" viewBox="0 0 9 8"><path d="M1 2.5L4 .5h4L5 2.5zM1 4.2L4 2.2h4L5 4.2zM1 6L4 4h4L5 6zM1 7.5h4L8 5.5" fill="#f3d22c" stroke="#3a3a10" stroke-width=".7"/></svg><b>Layers</b></div>
<div class="r b">${box(0)}${chk(1)}<span class="c">Calculation</span></div>
<div class="r v">Value</div>
<toc-legend high="50.0421" low="-49.8215"></toc-legend>
<div class="r b">${box(1)}${chk(0)}<span>NbrMean of dem</span></div>
<div class="r b">${box(0)}${chk(0)}<span>dem</span></div>
<div class="r v">Value</div>
<toc-legend high="1322.8" low="1036.9"></toc-legend>
</div>
<div class="t"><span>Display</span><span>Source</span><span>Selection</span></div>`;
});
</script>
</body></html>
